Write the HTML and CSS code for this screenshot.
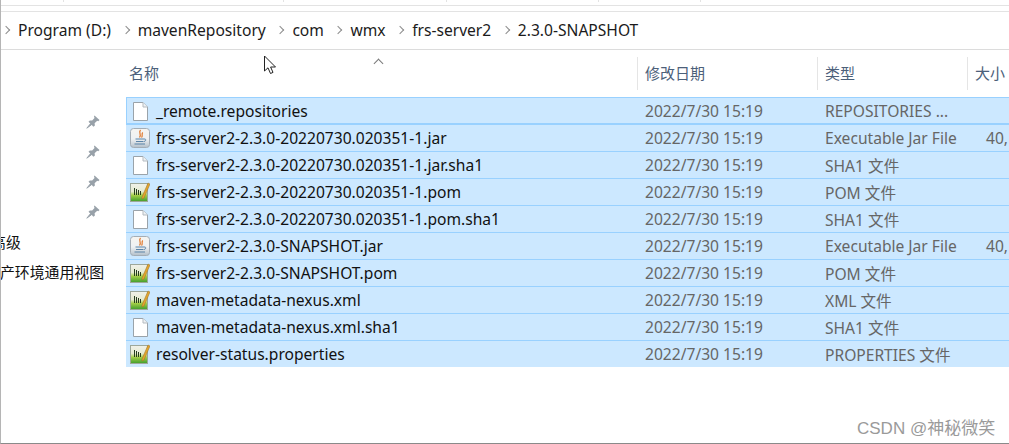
FILE: index.html
```html
<!DOCTYPE html>
<html lang="zh">
<head>
<meta charset="utf-8">
<title>2.3.0-SNAPSHOT</title>
<link rel="stylesheet" href="styles.css">
</head>
<body>
<svg class="defs" width="0" height="0" aria-hidden="true">
  <defs>
    <linearGradient id="jbg" x1="0" y1="0" x2="0" y2="1"><stop offset="0" stop-color="#f6f4f0"/><stop offset=".55" stop-color="#eef1f3"/><stop offset="1" stop-color="#b4c0ca"/></linearGradient>
    <linearGradient id="nbg" x1="0" y1="0" x2="0" y2="1"><stop offset="0" stop-color="#f0f1ea"/><stop offset=".45" stop-color="#e6ebcf"/><stop offset=".65" stop-color="#a5cf48"/><stop offset="1" stop-color="#3f9d2c"/></linearGradient>
    <symbol id="i-file" viewBox="0 0 20 20">
      <path d="M3.5 1.5H13L17.5 6V19.5H3.5Z" fill="#fff" stroke="#9aa3aa"/>
      <path d="M13 1.5V6H17.5" fill="#eef1f3" stroke="#b4bbc1"/>
    </symbol>
    <symbol id="i-jar" viewBox="0 0 20 20">
      <rect x=".5" y=".5" width="19" height="19" rx="3" fill="url(#jbg)" stroke="#a3adb6"/>
      <path d="M10.5 2C8 5 12 6 9.5 9.5M12.8 4.5C11 6 13.3 7.5 11.5 9.5" fill="none" stroke="#e0782c" stroke-width="1.2"/>
      <path d="M5.5 10.5H14V11.5H5.5ZM6 13H13.5V14H6ZM4.5 15.5H15V16.5H4.5Z" fill="#5b84a8"/>
      <path d="M14 11C16.3 10.5 16.5 13 14 13.5" fill="none" stroke="#5b84a8"/>
    </symbol>
    <symbol id="i-pom" viewBox="0 0 20 20">
      <rect x=".5" y="1.5" width="17" height="18" fill="url(#nbg)" stroke="#9da89a"/>
      <path d="M4.5 6V13M6.5 7V13M8.5 8V13M10.5 9V13" stroke="#263d1e" stroke-width="1"/>
      <path d="M12 15L18 1L20 2L14 16L12 17Z" fill="#e3a42c" stroke="#97702a" stroke-width=".5"/>
    </symbol>
    <symbol id="i-pin" viewBox="0 0 14 14">
      <path d="M8.5 0.5L13.5 5L12.3 6.2L11.2 5.7L8.6 8.2L8.9 10.5L7.5 11.7L2.5 6.8L3.9 5.4L6.2 5.6L8.5 3L8 1.2Z" fill="#98a1a9"/>
      <path d="M4.6 8.6L0.8 13.2L5.6 9.6Z" fill="#98a1a9" stroke="#98a1a9"/>
    </symbol>
  </defs>
</svg>

<div class="window">
  <div class="ribbon">
    <span class="tick tick-a"></span><span class="tick tick-b"></span><span class="tick tick-c"></span><span class="tick tick-d"></span><span class="tick tick-e"></span>
  </div>
  <nav class="crumbs">
    <span class="chev"></span><span class="crumb">Program (D:)</span>
    <span class="chev"></span><span class="crumb">mavenRepository</span>
    <span class="chev"></span><span class="crumb">com</span>
    <span class="chev"></span><span class="crumb">wmx</span>
    <span class="chev"></span><span class="crumb">frs-server2</span>
    <span class="chev"></span><span class="crumb">2.3.0-SNAPSHOT</span>
  </nav>
  <div class="body">
    <aside class="side">
      <div class="pins">
        <svg class="pin"><use href="#i-pin"/></svg>
        <svg class="pin"><use href="#i-pin"/></svg>
        <svg class="pin"><use href="#i-pin"/></svg>
        <svg class="pin"><use href="#i-pin"/></svg>
      </div>
      <div class="side-label label-a">高级</div>
      <div class="side-label label-b">生产环境通用视图</div>
    </aside>
    <section class="list">
      <div class="head">
        <div class="hcell hname">名称<span class="sort"></span></div>
        <div class="hcell hdate">修改日期</div>
        <div class="hcell htype">类型</div>
        <div class="hcell hsize">大小</div>
      </div>
      <div class="rows">
        <div class="row first"><svg class="ico"><use href="#i-file"/></svg><span class="name">_remote.repositories</span><span class="date">2022/7/30 15:19</span><span class="type">REPOSITORIES ...</span><span class="size"></span></div>
        <div class="row"><svg class="ico"><use href="#i-jar"/></svg><span class="name">frs-server2-2.3.0-20220730.020351-1.jar</span><span class="date">2022/7/30 15:19</span><span class="type">Executable Jar File</span><span class="size">40,</span></div>
        <div class="row"><svg class="ico"><use href="#i-file"/></svg><span class="name">frs-server2-2.3.0-20220730.020351-1.jar.sha1</span><span class="date">2022/7/30 15:19</span><span class="type">SHA1 文件</span><span class="size"></span></div>
        <div class="row"><svg class="ico"><use href="#i-pom"/></svg><span class="name">frs-server2-2.3.0-20220730.020351-1.pom</span><span class="date">2022/7/30 15:19</span><span class="type">POM 文件</span><span class="size"></span></div>
        <div class="row"><svg class="ico"><use href="#i-file"/></svg><span class="name">frs-server2-2.3.0-20220730.020351-1.pom.sha1</span><span class="date">2022/7/30 15:19</span><span class="type">SHA1 文件</span><span class="size"></span></div>
        <div class="row"><svg class="ico"><use href="#i-jar"/></svg><span class="name">frs-server2-2.3.0-SNAPSHOT.jar</span><span class="date">2022/7/30 15:19</span><span class="type">Executable Jar File</span><span class="size">40,</span></div>
        <div class="row"><svg class="ico"><use href="#i-pom"/></svg><span class="name">frs-server2-2.3.0-SNAPSHOT.pom</span><span class="date">2022/7/30 15:19</span><span class="type">POM 文件</span><span class="size"></span></div>
        <div class="row"><svg class="ico"><use href="#i-pom"/></svg><span class="name">maven-metadata-nexus.xml</span><span class="date">2022/7/30 15:19</span><span class="type">XML 文件</span><span class="size"></span></div>
        <div class="row"><svg class="ico"><use href="#i-file"/></svg><span class="name">maven-metadata-nexus.xml.sha1</span><span class="date">2022/7/30 15:19</span><span class="type">SHA1 文件</span><span class="size"></span></div>
        <div class="row"><svg class="ico"><use href="#i-pom"/></svg><span class="name">resolver-status.properties</span><span class="date">2022/7/30 15:19</span><span class="type">PROPERTIES 文件</span><span class="size"></span></div>
      </div>
    </section>
  </div>

  <svg class="cursor" width="14" height="20" viewBox="0 0 14 20"><path d="M1.5 1V16L5 12.8L7.5 18.5L10 17.4L7.6 12H12.5Z" fill="#fff" stroke="#222"/></svg>
  <div class="watermark">CSDN @神秘微笑</div>
</div>
</body>
</html>
```

FILE: styles.css
```css
* { box-sizing: border-box; }
html, body { margin: 0; height: 100%; background: #fff; overflow: hidden; }
.defs { position: absolute; }
.window {
  position: relative;
  width: 1009px;
  height: 444px;
  overflow: hidden;
  display: flex;
  flex-direction: column;
  background: #fff;
  border-left: 1px solid #b5b5b5;
  border-bottom: 1px solid #8a8a8a;
  font-family: "Noto Sans", "Noto Sans CJK SC", sans-serif;
  font-size: 15.6px;
}

.ribbon {
  position: relative;
  height: 12px;
  flex: none;
  background: linear-gradient(#e3e3e3, #e3e3e3) 0 5px / 100% 1px no-repeat;
  border-bottom: 1px solid #e3e3e3;
}
.tick { position: absolute; top: 0; width: 1px; height: 2px; background: #e3e3e3; }
.tick-a { left: 62px; }
.tick-b { left: 282px; }
.tick-c { left: 445px; }
.tick-d { left: 597px; }
.tick-e { left: 699px; }

.crumbs {
  height: 38px;
  flex: none;
  display: flex;
  align-items: center;
  border-bottom: 1px solid #dcdcdc;
  padding: 0 0 2px 2px;
  color: #1b1b1b;
}
.chev {
  width: 6px;
  height: 6px;
  border-top: 1.5px solid #8c8c8c;
  border-right: 1.5px solid #8c8c8c;
  transform: rotate(45deg);
  margin: 0 9px 0 0;
  flex: none;
}
.crumb { margin-right: 11.6px; white-space: nowrap; }

.body { flex: 1; display: flex; min-height: 0; }
.side { width: 125px; flex: none; position: relative; overflow: hidden; color: #111; font-size: 14.9px; }
.pins { display: flex; flex-direction: column; gap: 16px; align-items: flex-end; padding: 65px 26px 0 0; }
.pin { width: 14px; height: 14px; display: block; }
.side-label { white-space: nowrap; line-height: 20px; }
.label-a { margin: 13px 0 0 -10px; }
.label-b { margin: 10px 0 0 -16px; }

.list { flex: 1; min-width: 0; }
.head { height: 47px; display: grid; grid-template-columns: 512px 180px 150px 1fr; padding-top: 7px; color: #4c607a; }
.hcell { position: relative; height: 33px; display: flex; align-items: center; padding: 0 0 2px 7px; border-right: 1px solid #e5e5e5; font-size: 15px; white-space: nowrap; }
.hname { padding-left: 3px; }
.hsize { border-right: 0; }
.sort {
  position: absolute;
  left: 249px;
  top: 3px;
  width: 7px;
  height: 7px;
  border-top: 1px solid #7a7a7a;
  border-left: 1px solid #7a7a7a;
  transform: rotate(45deg);
}

.rows { display: flex; flex-direction: column; }
.row {
  height: 27px;
  display: grid;
  grid-template-columns: 30px 481px 180px 150px 1fr;
  align-items: center;
  background: #cce8ff;
  border-top: 1px solid #99d1ff;
  white-space: nowrap;
  overflow: hidden;
}
.first { box-shadow: inset 1px 0 #99d1ff; border-bottom: 1px solid #99d1ff; }
.ico { width: 20px; height: 20px; margin-left: 4px; display: block; }
.name { color: #111; }
.date, .type, .size { color: #666; padding-left: 8px; }
.size { padding-left: 19px; }

.cursor { position: absolute; left: 262px; top: 55px; }
.watermark {
  position: absolute;
  left: 856px;
  top: 414px;
  color: #9a9a9a;
  font-family: "Liberation Sans", "Noto Sans CJK SC", sans-serif;
  font-size: 17px;
  white-space: nowrap;
}
```
